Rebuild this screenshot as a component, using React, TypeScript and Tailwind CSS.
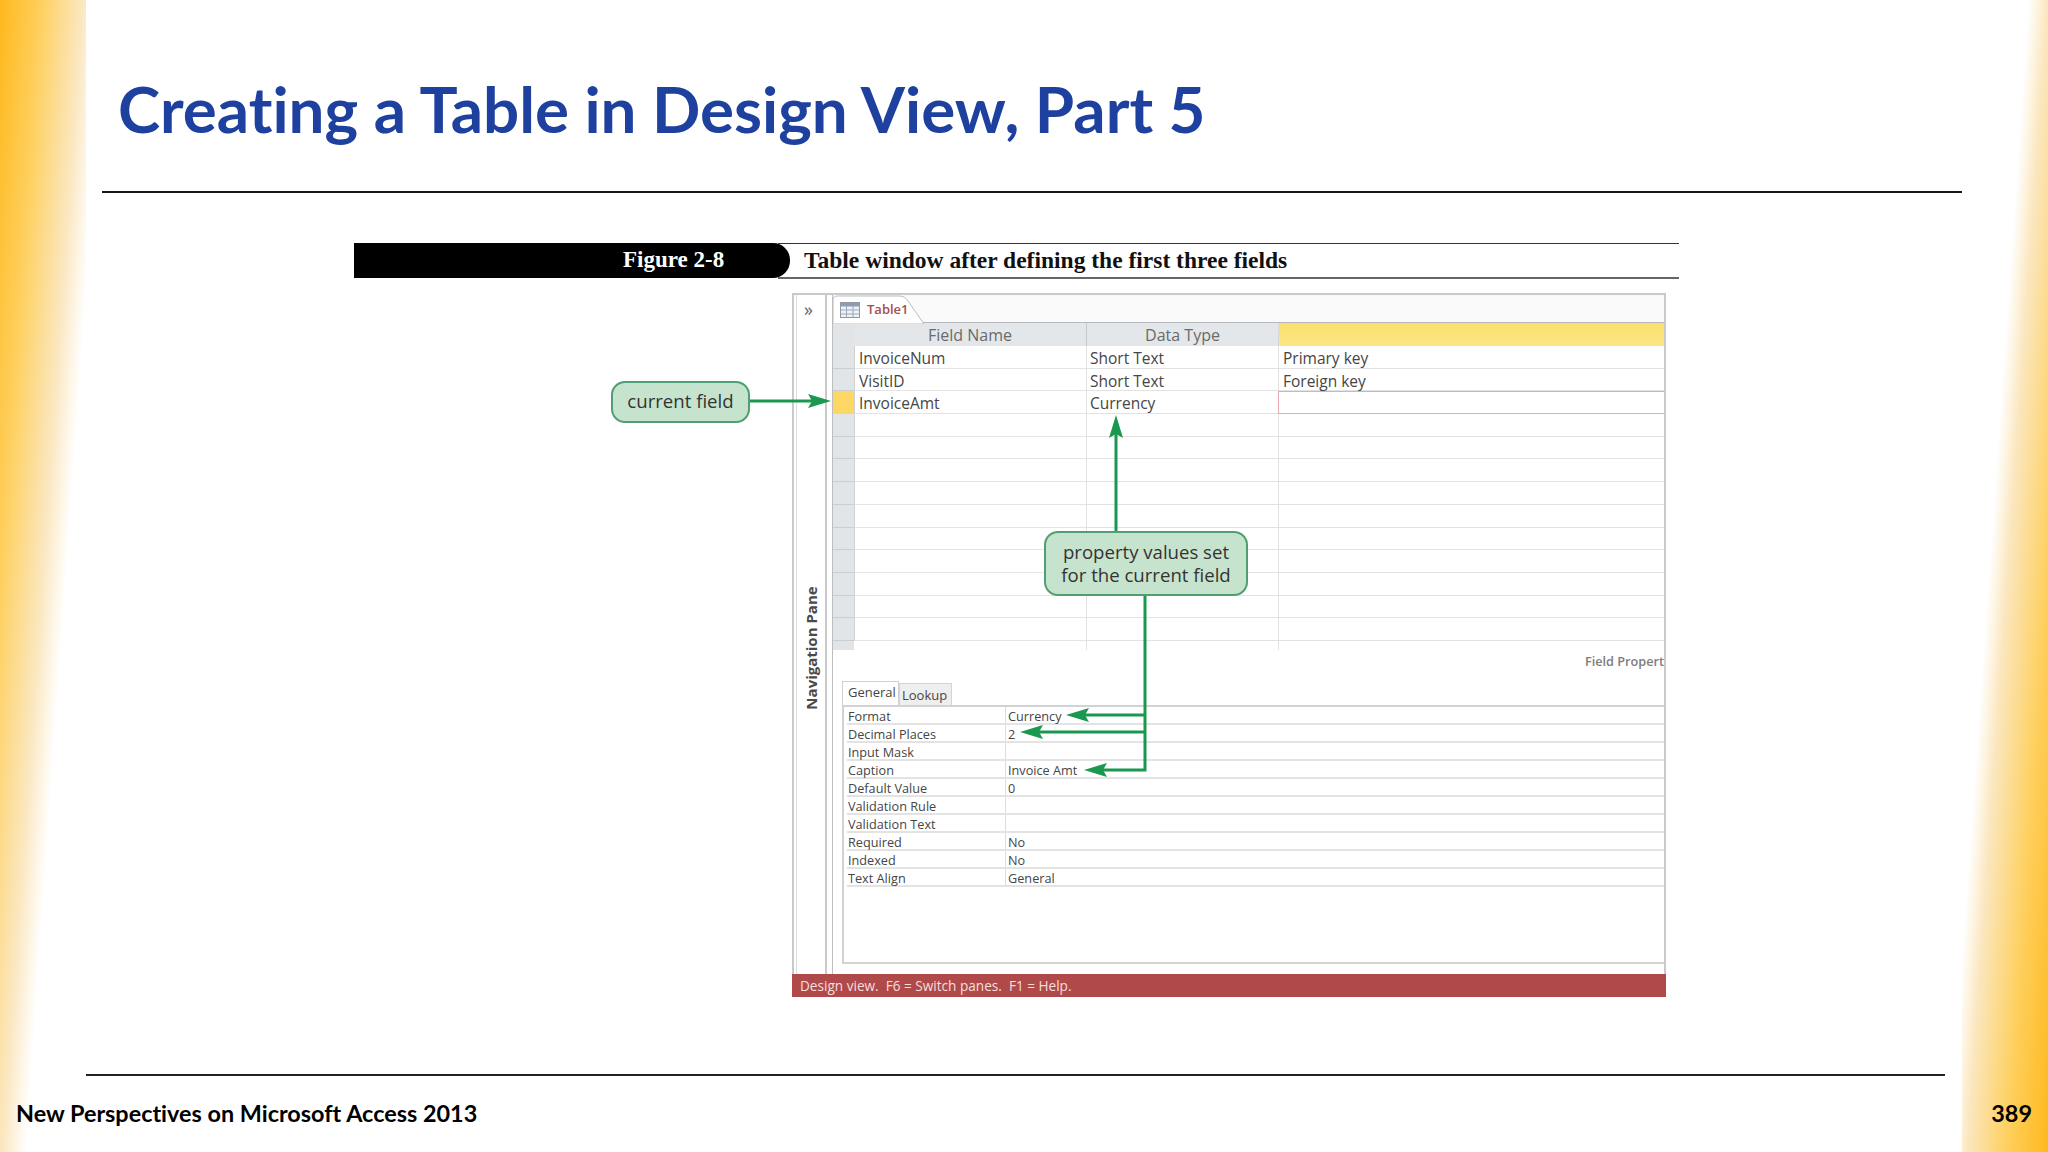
const fields = [
  { name: 'InvoiceNum', type: 'Short Text', desc: 'Primary key' },
  { name: 'VisitID', type: 'Short Text', desc: 'Foreign key' },
  { name: 'InvoiceAmt', type: 'Currency', desc: '', current: true },
  ...Array.from({ length: 10 }, () => ({ name: '', type: '', desc: '' })),
];

const props = [
  ['Format', 'Currency'],
  ['Decimal Places', '2'],
  ['Input Mask', ''],
  ['Caption', 'Invoice Amt'],
  ['Default Value', '0'],
  ['Validation Rule', ''],
  ['Validation Text', ''],
  ['Required', 'No'],
  ['Indexed', 'No'],
  ['Text Align', 'General'],
];

function TableIcon() {
  return (
    <svg width="20" height="16" viewBox="0 0 20 16" className="mr-[7px] shrink-0">
      <rect x="0.5" y="0.5" width="19" height="15" fill="#eef2f6" stroke="#8f99a6" />
      <rect x="1" y="1" width="18" height="3.5" fill="#8d9cb0" />
      <path d="M1 8h18M1 12h18M6.5 4v11M13 4v11" stroke="#9aa8ba" strokeWidth="1" />
    </svg>
  );
}

// green leader lines, coordinates are relative to the window's top left corner
function Arrows() {
  const green = '#1b9850';
  return (
    <svg width="1100" height="720" className="absolute left-[-200px] top-0 pointer-events-none" viewBox="-200 0 1100 720">
      <g stroke={green} strokeWidth="3" fill="none">
        <path d="M-42 108H20" />
        <path d="M324 238V135" />
        <path d="M353 303V477H300" />
        <path d="M353 422H290" />
        <path d="M353 439H245" />
      </g>
      <g fill={green}>
        <path d="M39 108L16 101L20 108L16 115Z" />
        <path d="M324 122L317 145L324 141L331 145Z" />
        <path d="M274 422L297 415L293 422L297 429Z" />
        <path d="M228 439L251 432L247 439L251 446Z" />
        <path d="M292 477L315 470L311 477L315 484Z" />
      </g>
    </svg>
  );
}

export default function App() {
  return (
    <div className="relative w-[2048px] h-[1152px] overflow-hidden bg-white flex flex-col font-['Lato',sans-serif] [font-variant-ligatures:none]">
      {/* side bands */}
      <div className="absolute left-0 top-0 w-[86px] h-full bg-[linear-gradient(94deg,#ffb81c_0%,#fed05f_25%,#fbe8c2_50%,#ffffff_64%)]" />
      <div className="absolute right-0 top-0 w-[86px] h-full bg-[linear-gradient(274deg,#ffb81c_0%,#fed05f_25%,#fbe6bc_48%,#ffffff_60%)]" />

      {/* title */}
      <h1 className="relative h-[191px] pl-[118px] flex items-center pt-[27px] text-[63.7px] font-bold text-[#1e409f] leading-none">
        Creating a Table in Design View, Part 5
      </h1>
      <div className="relative ml-[102px] w-[1860px] h-[2px] bg-[#161616]" />

      {/* figure heading */}
      <div className="relative ml-[354px] mt-[50px] w-[1325px] h-[36px] flex font-['Liberation_Serif',serif] font-bold">
        <div className="w-[436px] h-[35px] bg-black rounded-r-[17px] text-white text-[23px] flex items-center pl-[269px] z-10">
          Figure 2-8
        </div>
        <div className="flex-1 -ml-[12px] pl-[26px] border-t border-b-2 border-t-[#333] border-b-[#666] flex items-center text-[23.5px] text-[#111] pt-[1px]">
          Table window after defining the first three fields
        </div>
      </div>

      {/* access window */}
      <div className="relative ml-[792px] mt-[14px] w-[874px] h-[704px] flex flex-col font-['Open_Sans',sans-serif] text-[#454545]">
        <div className="flex-1 flex min-h-0 border-t-2 border-r-2 border-[#c9c9cc]">
          {/* navigation pane */}
          <div className="w-[41px] shrink-0 flex border-l-2 border-[#c9c9cc]">
            <div className="ml-[2px] w-[31px] border-l border-r-2 border-l-[#dcdcdc] border-r-[#c9c9cc] relative">
              <span className="absolute left-[7px] top-[5px] text-[18px] leading-none text-[#666]">»</span>
              <span className="absolute left-[-48px] top-[343px] w-[124px] h-[20px] -rotate-90 text-center text-[15px] leading-[20px] font-bold text-[#4a4a4a] whitespace-nowrap">
                Navigation Pane
              </span>
            </div>
            <div className="w-[6px] border-r border-[#bdbdbd]" />
          </div>

          <div className="flex-1 min-w-0 flex flex-col">
            {/* tab strip */}
            <div className="relative h-[28px] bg-[#fafafa] border-b border-[#b5b8bc] flex items-center pl-[7px]">
              <svg width="96" height="29" viewBox="0 0 96 29" className="absolute left-0 top-0">
                <path d="M0 29V5Q0 1 5 1H66Q72 1 75 6L91 29Z" fill="#fff" stroke="#bcbcbc" />
              </svg>
              <span className="relative flex items-center pt-[2px]">
                <TableIcon />
                <span className="text-[13px] font-semibold text-[#a0504e]">Table1</span>
              </span>
            </div>

            {/* field grid */}
            <div className="flex h-[23px] text-[16px] text-[#6a6a6a]">
              <div className="w-[21px] bg-[#e1e5e8]" />
              <div className="w-[232px] bg-[#e3e7ea] text-center leading-[24px]">Field Name</div>
              <div className="w-[192px] bg-[#e3e7ea] border-l border-[#c6c9cc] text-center leading-[24px]">Data Type</div>
              <div className="flex-1 bg-[linear-gradient(180deg,#fbe06c,#fce685)] border-l border-[#d8d8d8]" />
            </div>
            {fields.map((f, i) => (
              <div key={i} className="flex h-[22.7px] text-[15.5px] leading-[24px]">
                <div className={`w-[21px] border-b ${f.current ? 'bg-[#fcd766] border-[#fcd766]' : 'bg-[#e1e5e8] border-[#c9ced3]'}`} />
                <div className="w-[232px] pl-[4px] border-b border-[#e4e4e4] border-l border-l-[#d0d0d0]">{f.name}</div>
                <div className="w-[192px] pl-[3px] border-l border-b border-[#e2e2e2]">{f.type}</div>
                {f.current ? (
                  <div className="flex-1 border border-r-0 border-[#eba9b0]" />
                ) : (
                  <div className="flex-1 pl-[4px] border-l border-b border-[#e2e2e2]">{f.desc}</div>
                )}
              </div>
            ))}
            <div className="flex h-[9px]">
              <div className="w-[21px] bg-[#e1e5e8]" />
              <div className="w-[232px]" />
              <div className="w-[192px] border-l border-[#e2e2e2]" />
              <div className="flex-1 border-l border-[#e2e2e2]" />
            </div>

            {/* field properties */}
            <div className="h-[54px] flex justify-end">
              <span className="whitespace-nowrap text-[12.7px] font-semibold text-[#7c7c7c] leading-none pt-[5px]">
                Field Propert
              </span>
            </div>
            <div className="flex-1 flex flex-col pl-[9px] pb-[10px]">
              <div className="relative h-[1px]">
                <div className="absolute left-0 bottom-0 flex items-end text-[13px]">
                  <span className="w-[57px] h-[24px] bg-white border border-b-0 border-[#d0d0d0] pl-[5px] leading-[21px]">General</span>
                  <span className="w-[53px] h-[22px] bg-[#eeeeee] border border-b-0 border-[#d4d4d4] pl-[2px] leading-[23px]">Lookup</span>
                </div>
              </div>
              <div className="flex-1 border-t-2 border-b-2 border-l-2 border-[#d2d2d5] pl-[3px] pt-0 text-[12.7px] leading-[19px]">
                {props.map(([label, value]) => (
                  <div key={label} className="flex h-[18px] border-b-2 border-[#e3e3e3]">
                    <div className="w-[159px] pl-[1px] border-r border-[#dcdcdc]">{label}</div>
                    <div className="flex-1 pl-[2px]">{value}</div>
                  </div>
                ))}
              </div>
            </div>
          </div>
        </div>

        <div className="h-[23px] shrink-0 bg-[#b04a4a] pl-[8px] text-[13.6px] leading-[24px] text-[#f6dede] whitespace-pre">
          {'Design view.  F6 = Switch panes.  F1 = Help.'}
        </div>

        <Arrows />

        {/* callouts */}
        <div className="absolute left-[-181px] top-[88px] w-[139px] h-[42px] rounded-[14px] border-2 border-[#4f9f70] bg-[#c6e4cd] text-center text-[18.6px] leading-[36px] text-[#333]">
          current field
        </div>
        <div className="absolute left-[252px] top-[238px] w-[204px] h-[65px] rounded-[14px] border-2 border-[#4f9f70] bg-[#c6e4cd] text-center text-[18.6px] leading-[23px] pt-[7px] text-[#333]">
          property values set
          <br />
          for the current field
        </div>
      </div>

      {/* footer */}
      <div className="relative ml-[86px] mt-[77px] w-[1859px] h-[2px] bg-[#222]" />
      <div className="relative flex justify-between pl-[16px] pr-[16px] mt-[26px] text-[23.4px] font-bold leading-none text-black">
        <span>New Perspectives on Microsoft Access 2013</span>
        <span>389</span>
      </div>
    </div>
  );
}
